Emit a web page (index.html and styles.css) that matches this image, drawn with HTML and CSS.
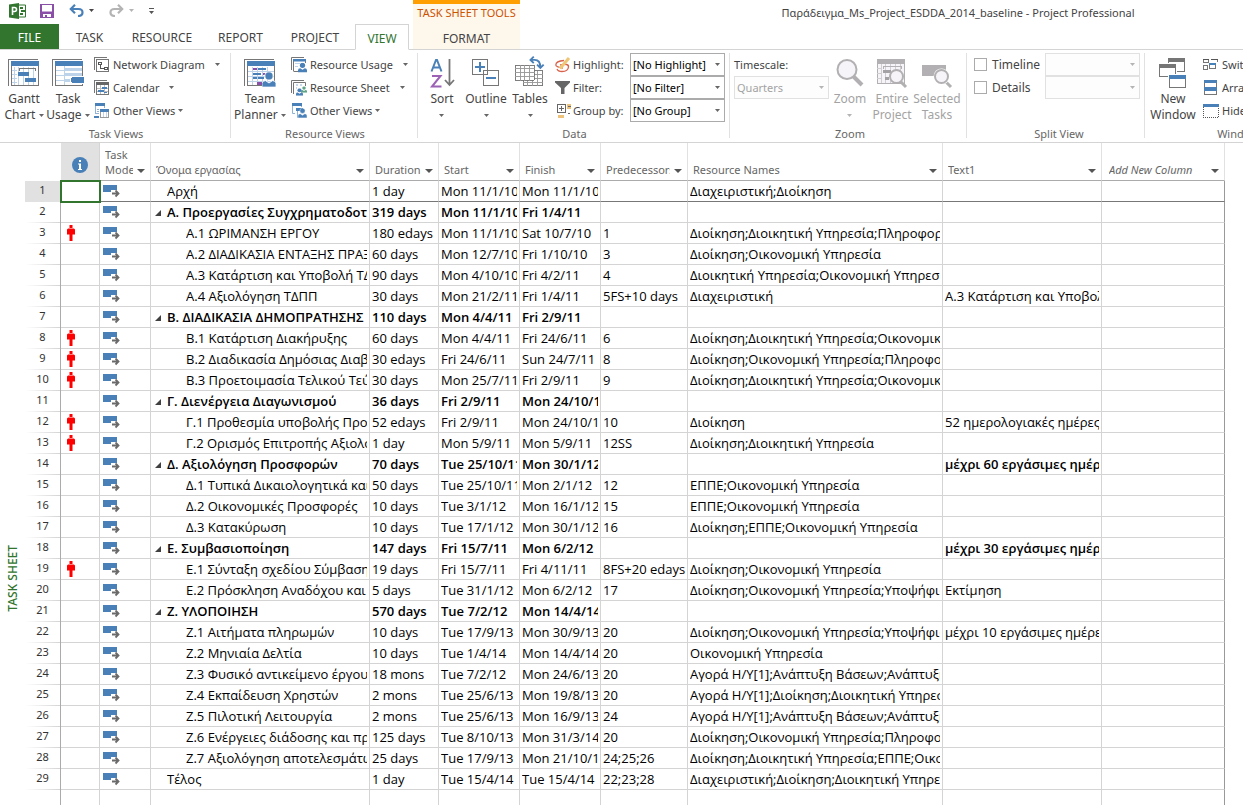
FILE: index.html
```html
<!DOCTYPE html>
<html lang="en">
<head>
<meta charset="utf-8">
<title>Παράδειγμα_Ms_Project_ESDDA_2014_baseline - Project Professional</title>
<link rel="stylesheet" href="styles.css">
</head>
<body>
<svg class="defs" aria-hidden="true">
  <symbol id="caret" viewBox="0 0 5 3"><path d="M0 0H5L2.500 3Z" fill="currentColor"/></symbol>
  <symbol id="drop" viewBox="0 0 8 5"><path d="M0 1H8L4 5Z" fill="currentColor"/></symbol>
  <symbol id="mode" viewBox="0 0 17 14">
    <path d="M0 1H14V8H0Z" fill="#4a80b8"/>
    <path d="M8 6H14V8H8Z" fill="#fff"/>
    <path d="M9 9.500H15M12.500 6.500 15.500 9.500l-3 3" fill="none" stroke="#6a6a6a" stroke-width="1.800"/>
  </symbol>
  <symbol id="man" viewBox="0 0 8 16"><path d="M2.500 0h3v3h-3zM1 3.500h6l1 1v5H5.500V16h-3V9.500H0v-5z" fill="#f00"/></symbol>
  <symbol id="tri" viewBox="0 0 6 6"><path d="M6 0V6H0Z" fill="#404040"/></symbol>
  <symbol id="person" viewBox="0 0 12 13"><circle cx="6" cy="3.500" r="3.500"/><path d="M0 13V10Q0 7.500 3 7.500L6 9.500L9 7.500Q12 7.500 12 10V13Z"/></symbol>
</svg>
<div class="app">
  <header class="top">
    <div class="left">
      <div class="qat">
        <svg class="logo" width="18" height="16" viewBox="0 0 18 16"><path d="M8 2h8.500v12H8z" fill="#fff" stroke="#31752f"/><path d="M11 4h3v2h-3zM12 7h4v2h-4zM11 10h3v2h-3z" fill="#31752f"/><path d="M0 1.500 10 0v16L0 14.500z" fill="#31752f"/><path d="M3.500 12V4.500h2a1.800 1.800 0 0 1 0 4h-2" fill="none" stroke="#fff" stroke-width="1.600"/></svg>
        <button class="q-save" aria-label="Save"><svg width="14" height="14" viewBox="0 0 14 14"><path d="M0 0h14v14H0z" fill="#8a50a8"/><path d="M2 1h10v6.500H2zM3 10h8v3H7v-2H5v2H3z" fill="#fff"/></svg></button>
        <button class="q-undo" aria-label="Undo"><svg width="15" height="13" viewBox="0 0 15 13"><path d="M1.500 5H9.500Q13.500 5 13.500 8.500T9 12M6 .8 1.800 5 6 9.200" fill="none" stroke="#4a80b8" stroke-width="2.200"/></svg></button>
        <button class="q-c1" aria-label="Undo list"><svg width="5" height="3"><use href="#caret"/></svg></button>
        <button class="q-redo dim" aria-label="Redo"><svg width="15" height="13" viewBox="0 0 15 13"><path d="M13.500 5H5.500Q1.500 5 1.500 8.500T6 12M9 .8 13.200 5 9 9.200" fill="none" stroke="#b4b4b4" stroke-width="2.200"/></svg></button>
        <button class="q-c2 dim" aria-label="Redo list"><svg width="5" height="3"><use href="#caret"/></svg></button>
        <button class="q-cust" aria-label="Customize"><svg width="5" height="6" viewBox="0 0 5 6"><path d="M0 0h5v1H0zM0 3h5L2.500 6z" fill="#555"/></svg></button>
      </div>
      <nav class="tabs">
        <button class="tab file">FILE</button>
        <button class="tab t-task">TASK</button>
        <button class="tab t-res">RESOURCE</button>
        <button class="tab t-rep">REPORT</button>
        <button class="tab t-pro">PROJECT</button>
        <button class="tab active">VIEW</button>
      </nav>
    </div>
    <div class="context">
      <div class="context-name">TASK SHEET TOOLS</div>
      <button class="tab">FORMAT</button>
    </div>
    <h1 class="title">Παράδειγμα_Ms_Project_ESDDA_2014_baseline - Project Professional</h1>
  </header>

  <div class="ribbon">
    <section class="group g-task">
      <div class="controls">
        <button class="big w44"><svg width="32" height="30" viewBox="0 0 32 30" shape-rendering="crispEdges"><path d="M.5 27V.5H30" fill="none" stroke="#767676"/><path d="M3.500 3.500h27v23h-27z" fill="#fff" stroke="#767676"/><path d="M3 2h28v5H3z" fill="#4a80b8"/><path d="M6.500 8v18M4 11.500h5M4 15.500h5M4 19.500h5M4 23.500h5M10.500 8v18M15.500 8v18M20.500 8v18M25.500 8v18" fill="none" stroke="#bdd3ea"/><path d="M11.500 12V9.500h16V12" fill="none" stroke="#767676"/><path d="M10 13h11v4H10zM17 19h11v4H17z" fill="#4a80b8"/></svg><span>Gantt<br>Chart <svg width="5" height="3"><use href="#caret"/></svg></span></button>
        <button class="big w44"><svg width="32" height="30" viewBox="0 0 32 30" shape-rendering="crispEdges"><path d="M.5 27V.5H30" fill="none" stroke="#767676"/><path d="M3.500 3.500h27v23h-27z" fill="#fff" stroke="#767676"/><path d="M3 2h28v5H3z" fill="#4a80b8"/><path d="M4 11.500h8M4 16.500h8M4 21.500h8M12.500 7v19" fill="none" stroke="#bdd3ea"/><path d="M13 9h17v3H13zM13 14h17v3H13zM13 20h6v3h-6z" fill="#bdd3ea"/><path d="M18 17h14v8H18z" fill="#fff"/><path d="M20 18h11l1 1v4l-1 1H20l-1-1v-4z" fill="#4a80b8"/></svg><span>Task<br>Usage <svg width="5" height="3"><use href="#caret"/></svg></span></button>
        <div class="stack">
          <button class="small"><svg width="16" height="16" viewBox="0 0 16 16" shape-rendering="crispEdges"><path d="M.5 13V.5H13M2.500 2.500h12v12h-12z" fill="none" stroke="#767676"/><path d="M4.500 5.500h3v2h-3zM10.500 10.500h3v2h-3zM6.500 8v3.500H10" fill="none" stroke="#555"/></svg><span>Network Diagram</span><svg class="far" width="5" height="3"><use href="#caret"/></svg></button>
          <button class="small"><svg width="16" height="16" viewBox="0 0 16 16" shape-rendering="crispEdges"><path d="M.5 13V.5H13M2.500 2.500h12v12h-12z" fill="none" stroke="#767676"/><path d="M2 2h13v3H2z" fill="#666"/><path d="M3 8.500h11M3 11.500h11M6.500 5v9M10.500 5v9" stroke="#bbb"/><path d="M8 7h5v2H8zM4 10h6v2H4zM10 12h3v1h-3z" fill="#4a80b8"/></svg><span>Calendar</span><svg class="far" width="5" height="3"><use href="#caret"/></svg></button>
          <button class="small"><svg width="16" height="16" viewBox="0 0 16 16" shape-rendering="crispEdges"><path d="M1.500 1.500h9v9h-9z" fill="#fff" stroke="#8fb2d8"/><path d="M1 0h10v3H1zM0 13h5v2H0z" fill="#4a80b8"/><path d="M3 6h4M3 8.500h2" stroke="#8fb2d8"/><path d="M5 5h10v10H5z" fill="#fff"/><path d="M6.500 7.500h8v7h-8z" fill="none" stroke="#999"/><path d="M6 6h9v3H6z" fill="#4a80b8"/><path d="M9.500 9v5M12.500 9v5" stroke="#bdd3ea"/></svg><span>Other Views</span><svg width="5" height="3"><use href="#caret"/></svg></button>
        </div>
      </div>
      <h2>Task Views</h2>
    </section>

    <section class="group g-res">
      <div class="controls">
        <button class="big w54"><svg width="32" height="30" viewBox="0 0 32 30"><g shape-rendering="crispEdges"><path d="M.5 27V.5H30" fill="none" stroke="#767676"/><path d="M3.500 3.500h27v23h-27z" fill="#fff" stroke="#767676"/><path d="M3 2h28v5H3z" fill="#4a80b8"/><path d="M8.500 8v18M13.500 8v18M18.500 8v18M23.500 8v18M4 12.500h26M4 17.500h26M4 22.500h26" fill="none" stroke="#bdd3ea"/><path d="M9 9h4v2H9zM19 14h4v2h-4zM13 23h5v3h-5z" fill="#8a50a8"/><path d="M14 9h8v2h-8zM9 14h8v2H9zM9 18h4v2H9zM14 18h6v2h-6z" fill="#4a80b8"/></g><svg x="18" y="12" width="14" height="17" viewBox="0 0 12 13" fill="#4a80b8" stroke="#fff" stroke-width=".7"><use href="#person"/></svg></svg><span>Team<br>Planner <svg width="5" height="3"><use href="#caret"/></svg></span></button>
        <div class="stack">
          <button class="small"><svg width="16" height="16" viewBox="0 0 16 16"><path d="M.5 13V.5H13M2.500 14V2.500h12V6M2.500 14.500H8" fill="none" stroke="#767676"/><path d="M2 2h13v2.500H2z" fill="#4a80b8"/><path d="M4 6.500h5M4 9.500h3" stroke="#bdd3ea"/><svg x="7" y="5" width="9" height="11" viewBox="0 0 12 13" fill="#4a80b8"><use href="#person"/></svg></svg><span>Resource Usage</span><svg class="far" width="5" height="3"><use href="#caret"/></svg></button>
          <button class="small"><svg width="16" height="16" viewBox="0 0 16 16"><path d="M.5 13V.5H13M2.500 14V2.500h12V6" fill="none" stroke="#767676"/><path d="M5 5h2M9 5h2M5 8h1" stroke="#8fb2d8"/><svg x="10" y="5" width="6" height="9" viewBox="0 0 12 13" fill="#5fa487"><use href="#person"/></svg><svg x="5" y="8" width="7" height="8" viewBox="0 0 12 13" fill="#4a80b8"><use href="#person"/></svg></svg><span>Resource Sheet</span><svg class="far" width="5" height="3"><use href="#caret"/></svg></button>
          <button class="small"><svg width="16" height="16" viewBox="0 0 16 16"><path d="M1.500 1v9.500H4M10.500 1v3M6.500 5v9.500H9" fill="none" stroke="#8fb2d8"/><path d="M1 0h10v3H1zM5 5h7v3H5z" fill="#4a80b8"/><svg x="7" y="4" width="9" height="12" viewBox="0 0 12 13" fill="#4a80b8" stroke="#fff" stroke-width=".6"><use href="#person"/></svg></svg><span>Other Views</span><svg width="5" height="3"><use href="#caret"/></svg></button>
        </div>
      </div>
      <h2>Resource Views</h2>
    </section>

    <section class="group g-data">
      <div class="controls">
        <button class="big w44"><svg width="26" height="30" viewBox="0 0 26 30" fill="none"><path d="M2.500 12.500 7 1h1L12.500 12.500M4 8.500h7" stroke="#4a80b8" stroke-width="2"/><path d="M3 17h8.500L3 27.500h9.500" stroke="#9b62b5" stroke-width="2"/><path d="M20.500 0v26M16 21l4.500 5 4.500-5" stroke="#767676" stroke-width="1.800"/></svg><span>Sort<br><svg width="5" height="3"><use href="#caret"/></svg></span></button>
        <button class="big w44"><svg width="28" height="30" viewBox="0 0 28 30" shape-rendering="crispEdges"><path d="M.5.5h15v15H.5zM11.500 11.500h15v15h-15z" fill="#fff" stroke="#767676"/><path d="M3 7h10v2H3zM7 3h2v10H7zM14 18h10v2H14z" fill="#4a80b8"/></svg><span>Outline<br><svg width="5" height="3"><use href="#caret"/></svg></span></button>
        <button class="big w44"><svg width="32" height="34" viewBox="0 2 32 34"><g shape-rendering="crispEdges"><path d="M9.500 15.500h20v16h-20z" fill="#fff" stroke="#767676"/><path d="M9 19.500h21M9 23.500h21M9 27.500h21M13.500 16v16M18.500 16v16M24.500 16v16" stroke="#999"/><path d="M.5 9.500h20v16H.5z" fill="#fff" stroke="#767676"/><path d="M0 13.500h21M0 17.500h21M0 21.500h21M5.500 9v17M10.500 9v17M15.500 9v17" stroke="#999"/></g><path d="M16 4h5Q27 4 27 12M20 .5 16.500 4 20 7.500M23.500 9 27 12.500 30.500 9" fill="none" stroke="#4a80b8" stroke-width="2"/></svg><span>Tables<br><svg width="5" height="3"><use href="#caret"/></svg></span></button>
        <div class="fields">
          <svg width="16" height="16" viewBox="0 0 16 16"><path d="M9 3.500Q1 4 .8 8Q1 10 8 11M5 8Q14 6 13.500 10Q13 14.500 7 14.500Q3 14.500 2 12" fill="none" stroke="#d9624b" stroke-width="1.300"/><path d="M14 1 5 11.500" stroke="#eec676" stroke-width="3"/></svg>
          <label for="hl">Highlight:</label>
          <span class="pick"><select id="hl"><option>[No Highlight]</option></select><svg width="5" height="3"><use href="#caret"/></svg></span>
          <svg width="16" height="16" viewBox="0 0 16 16"><path d="M0 1h15v1.500L9.500 8v6H6V8L0 2.500z" fill="#666"/></svg>
          <label for="fl">Filter:</label>
          <span class="pick"><select id="fl"><option>[No Filter]</option></select><svg width="5" height="3"><use href="#caret"/></svg></span>
          <svg width="16" height="16" viewBox="0 0 16 16" shape-rendering="crispEdges"><path d="M2.500 1.500h8v8h-8zM4 5.500h5M6.500 3v5" fill="none" stroke="#666"/><path d="M12 1h4v5h-4zM3 12h6v3H3z" fill="#eec27a"/><path d="M13 3h3v1h-3zM13 10h2v1h-2z" fill="#666"/></svg>
          <label for="gr">Group by:</label>
          <span class="pick"><select id="gr"><option>[No Group]</option></select><svg width="5" height="3"><use href="#caret"/></svg></span>
        </div>
      </div>
      <h2>Data</h2>
    </section>

    <section class="group g-zoom">
      <div class="controls">
        <div class="scale">
          <label for="ts">Timescale:</label>
          <span class="pick"><select id="ts" disabled><option>Quarters</option></select><svg width="5" height="3"><use href="#caret"/></svg></span>
        </div>
        <button class="big w42" disabled><svg width="28" height="30" viewBox="0 0 28 30"><path d="m17 17 9 9" stroke="#b2b0b2" stroke-width="4"/><circle cx="11" cy="10.500" r="9.500" fill="#f6f4f8" stroke="#b2b0b2" stroke-width="2"/></svg><span>Zoom<br><svg width="5" height="3"><use href="#caret"/></svg></span></button>
        <button class="big w42" disabled><svg width="30" height="32" viewBox="0 0 30 32"><g shape-rendering="crispEdges"><path d="M.5 1.500h27v24H.5z" fill="#f6f4f8" stroke="#b2b0b2"/><path d="M0 1h28v5H0z" fill="#b2b0b2"/><path d="M4.500 6v19M8.500 6v19M13.500 6v19M18.500 6v19M23.500 6v19M0 10.500h5M0 15.500h5M0 20.500h5" stroke="#d0ced0"/><path d="M6.500 11V8.500h18V11" fill="none" stroke="#b2b0b2"/><path d="M6 12h8v3H6zM8 19h4v3H8z" fill="#a4a2a4"/></g><path d="m23 23 6 6" stroke="#b2b0b2" stroke-width="3"/><circle cx="19.500" cy="18.500" r="6.500" fill="#f6f4f8" stroke="#b2b0b2" stroke-width="2"/></svg><span>Entire<br>Project</span></button>
        <button class="big w48" disabled><svg width="30" height="32" viewBox="0 0 30 32"><path d="M0 7h24v11H0z" fill="#b2b0b2"/><path d="m23 23 6 6" stroke="#b2b0b2" stroke-width="3"/><circle cx="19.500" cy="18.500" r="8" fill="#fff"/><circle cx="19.500" cy="18.500" r="6.500" fill="#f6f4f8" stroke="#b2b0b2" stroke-width="2"/></svg><span>Selected<br>Tasks</span></button>
      </div>
      <h2>Zoom</h2>
    </section>

    <section class="group g-split">
      <div class="controls split">
        <label><input type="checkbox"> Timeline</label>
        <span class="pick"><select aria-label="Timeline view" disabled><option></option></select><svg width="5" height="3"><use href="#caret"/></svg></span>
        <label><input type="checkbox"> Details</label>
        <span class="pick"><select aria-label="Details view" disabled><option></option></select><svg width="5" height="3"><use href="#caret"/></svg></span>
      </div>
      <h2>Split View</h2>
    </section>

    <section class="group g-win">
      <div class="controls">
        <button class="big w52"><svg width="28" height="32" viewBox="0 0 28 32" shape-rendering="crispEdges"><path d="M9.500.5h16v13h-16z" fill="#fff" stroke="#767676"/><path d="M9 0h17v4H9z" fill="#767676"/><path d="M0 5h18v15H0z" fill="#fff"/><path d="M.5 6.500h16v12H.5z" fill="#fff" stroke="#767676"/><path d="M0 6h17v4H0z" fill="#767676"/><path d="M9 16h19v15H9z" fill="#fff"/><path d="M10.500 17.500h16v12h-16z" fill="#fff" stroke="#767676"/><path d="M10 17h17v4H10z" fill="#4a80b8"/></svg><span>New<br>Window</span></button>
        <div class="stack">
          <button class="small"><svg width="16" height="16" viewBox="0 0 16 16" shape-rendering="crispEdges"><path d="M.5 2.500h5v3h-5zM8.500 2.500h6V5M.5 8.500h4v4h-4zM6.500 6.500h6v5h-6z" fill="none" stroke="#767676"/><path d="M0 2h6v1H0zM8 2h7v1H8z" fill="#555"/><path d="M6 6h7v2H6z" fill="#4a80b8"/></svg><span>Switch Windows</span></button>
          <button class="small"><svg width="16" height="16" viewBox="0 0 16 16" shape-rendering="crispEdges"><path d="M1.500.5h12v14h-12z" fill="#fff" stroke="#767676"/><path d="M1 0h13v3H1zM1 7h13v4H1z" fill="#4a80b8"/></svg><span>Arrange All</span></button>
          <button class="small"><svg width="16" height="16" viewBox="0 0 16 16" shape-rendering="crispEdges"><path d="M.5 4v10.500h15V4" fill="none" stroke="#555" stroke-dasharray="1 1"/><path d="M0 1h16v3H0z" fill="#4a80b8"/></svg><span>Hide</span></button>
        </div>
      </div>
      <h2>Window</h2>
    </section>
  </div>

  <main>
    <aside><span>TASK SHEET</span></aside>
    <table>
      <colgroup><col class="c0"><col class="c1"><col class="c2"><col class="c3"><col class="c4"><col class="c5"><col class="c5"><col class="c7"><col class="c8"><col class="c9"><col class="c10"></colgroup>
      <thead><tr>
        <th></th>
        <th class="info"><svg width="16" height="16" viewBox="0 0 16 16"><circle cx="8" cy="8" r="8" fill="#4a80b8"/><path d="M7 3h2v2H7zM6 6.500h3V12h1v1H6v-1h1V7.500H6z" fill="#fff"/></svg></th>
        <th><div><span>Task Mode</span><button aria-label="Task Mode menu"><svg width="8" height="5"><use href="#drop"/></svg></button></div></th>
        <th><div><span>Όνομα εργασίας</span><button aria-label="Name menu"><svg width="8" height="5"><use href="#drop"/></svg></button></div></th>
        <th><div><span>Duration</span><button aria-label="Duration menu"><svg width="8" height="5"><use href="#drop"/></svg></button></div></th>
        <th><div><span>Start</span><button aria-label="Start menu"><svg width="8" height="5"><use href="#drop"/></svg></button></div></th>
        <th><div><span>Finish</span><button aria-label="Finish menu"><svg width="8" height="5"><use href="#drop"/></svg></button></div></th>
        <th><div><span>Predecessors</span><button aria-label="Predecessors menu"><svg width="8" height="5"><use href="#drop"/></svg></button></div></th>
        <th><div><span>Resource Names</span><button aria-label="Resource Names menu"><svg width="8" height="5"><use href="#drop"/></svg></button></div></th>
        <th><div><span>Text1</span><button aria-label="Text1 menu"><svg width="8" height="5"><use href="#drop"/></svg></button></div></th>
        <th class="add"><div><span>Add New Column</span><button aria-label="Add New Column menu"><svg width="8" height="5"><use href="#drop"/></svg></button></div></th>
      </tr></thead>
      <tbody>
        <tr class="current top-level"><th>1</th><td class="selected"></td><td><svg class="mode"><use href="#mode"/></svg></td><td><div>Αρχή</div></td><td><div>1 day</div></td><td><div>Mon 11/1/10</div></td><td><div>Mon 11/1/10</div></td><td></td><td><div>Διαχειριστική;Διοίκηση</div></td><td></td><td></td></tr>
        <tr class="summary"><th>2</th><td></td><td><svg class="mode"><use href="#mode"/></svg></td><td><div><svg class="tri"><use href="#tri"/></svg>Α. Προεργασίες Συγχρηματοδοτούμενου</div></td><td><div>319 days</div></td><td><div>Mon 11/1/10</div></td><td><div>Fri 1/4/11</div></td><td></td><td></td><td></td><td></td></tr>
        <tr><th>3</th><td><svg class="man"><use href="#man"/></svg></td><td><svg class="mode"><use href="#mode"/></svg></td><td><div>Α.1 ΩΡΙΜΑΝΣΗ ΕΡΓΟΥ</div></td><td><div>180 edays</div></td><td><div>Mon 11/1/10</div></td><td><div>Sat 10/7/10</div></td><td><div>1</div></td><td><div>Διοίκηση;Διοικητική Υπηρεσία;Πληροφορική</div></td><td></td><td></td></tr>
        <tr><th>4</th><td></td><td><svg class="mode"><use href="#mode"/></svg></td><td><div>Α.2 ΔΙΑΔΙΚΑΣΙΑ ΕΝΤΑΞΗΣ ΠΡΑΞΗΣ</div></td><td><div>60 days</div></td><td><div>Mon 12/7/10</div></td><td><div>Fri 1/10/10</div></td><td><div>3</div></td><td><div>Διοίκηση;Οικονομική Υπηρεσία</div></td><td></td><td></td></tr>
        <tr><th>5</th><td></td><td><svg class="mode"><use href="#mode"/></svg></td><td><div>Α.3 Κατάρτιση και Υποβολή ΤΔΠΠ</div></td><td><div>90 days</div></td><td><div>Mon 4/10/10</div></td><td><div>Fri 4/2/11</div></td><td><div>4</div></td><td><div>Διοικητική Υπηρεσία;Οικονομική Υπηρεσία</div></td><td></td><td></td></tr>
        <tr><th>6</th><td></td><td><svg class="mode"><use href="#mode"/></svg></td><td><div>Α.4 Αξιολόγηση ΤΔΠΠ</div></td><td><div>30 days</div></td><td><div>Mon 21/2/11</div></td><td><div>Fri 1/4/11</div></td><td><div>5FS+10 days</div></td><td><div>Διαχειριστική</div></td><td><div>Α.3 Κατάρτιση και Υποβολή</div></td><td></td></tr>
        <tr class="summary"><th>7</th><td></td><td><svg class="mode"><use href="#mode"/></svg></td><td><div><svg class="tri"><use href="#tri"/></svg>Β. ΔΙΑΔΙΚΑΣΙΑ ΔΗΜΟΠΡΑΤΗΣΗΣ</div></td><td><div>110 days</div></td><td><div>Mon 4/4/11</div></td><td><div>Fri 2/9/11</div></td><td></td><td></td><td></td><td></td></tr>
        <tr><th>8</th><td><svg class="man"><use href="#man"/></svg></td><td><svg class="mode"><use href="#mode"/></svg></td><td><div>Β.1 Κατάρτιση Διακήρυξης</div></td><td><div>60 days</div></td><td><div>Mon 4/4/11</div></td><td><div>Fri 24/6/11</div></td><td><div>6</div></td><td><div>Διοίκηση;Διοικητική Υπηρεσία;Οικονομική</div></td><td></td><td></td></tr>
        <tr><th>9</th><td><svg class="man"><use href="#man"/></svg></td><td><svg class="mode"><use href="#mode"/></svg></td><td><div>Β.2 Διαδικασία Δημόσιας Διαβούλευσης</div></td><td><div>30 edays</div></td><td><div>Fri 24/6/11</div></td><td><div>Sun 24/7/11</div></td><td><div>8</div></td><td><div>Διοίκηση;Οικονομική Υπηρεσία;Πληροφορική</div></td><td></td><td></td></tr>
        <tr><th>10</th><td><svg class="man"><use href="#man"/></svg></td><td><svg class="mode"><use href="#mode"/></svg></td><td><div>Β.3 Προετοιμασία Τελικού Τεύχους</div></td><td><div>30 days</div></td><td><div>Mon 25/7/11</div></td><td><div>Fri 2/9/11</div></td><td><div>9</div></td><td><div>Διοίκηση;Διοικητική Υπηρεσία;Οικονομική</div></td><td></td><td></td></tr>
        <tr class="summary"><th>11</th><td></td><td><svg class="mode"><use href="#mode"/></svg></td><td><div><svg class="tri"><use href="#tri"/></svg>Γ. Διενέργεια Διαγωνισμού</div></td><td><div>36 days</div></td><td><div>Fri 2/9/11</div></td><td><div>Mon 24/10/11</div></td><td></td><td></td><td></td><td></td></tr>
        <tr><th>12</th><td><svg class="man"><use href="#man"/></svg></td><td><svg class="mode"><use href="#mode"/></svg></td><td><div>Γ.1 Προθεσμία υποβολής Προσφορών</div></td><td><div>52 edays</div></td><td><div>Fri 2/9/11</div></td><td><div>Mon 24/10/11</div></td><td><div>10</div></td><td><div>Διοίκηση</div></td><td><div>52 ημερολογιακές ημέρες</div></td><td></td></tr>
        <tr><th>13</th><td><svg class="man"><use href="#man"/></svg></td><td><svg class="mode"><use href="#mode"/></svg></td><td><div>Γ.2 Ορισμός Επιτροπής Αξιολόγησης</div></td><td><div>1 day</div></td><td><div>Mon 5/9/11</div></td><td><div>Mon 5/9/11</div></td><td><div>12SS</div></td><td><div>Διοίκηση;Διοικητική Υπηρεσία</div></td><td></td><td></td></tr>
        <tr class="summary"><th>14</th><td></td><td><svg class="mode"><use href="#mode"/></svg></td><td><div><svg class="tri"><use href="#tri"/></svg>Δ. Αξιολόγηση Προσφορών</div></td><td><div>70 days</div></td><td><div>Tue 25/10/11</div></td><td><div>Mon 30/1/12</div></td><td></td><td></td><td><div>μέχρι 60 εργάσιμες ημέρες</div></td><td></td></tr>
        <tr><th>15</th><td></td><td><svg class="mode"><use href="#mode"/></svg></td><td><div>Δ.1 Τυπικά Δικαιολογητικά και</div></td><td><div>50 days</div></td><td><div>Tue 25/10/11</div></td><td><div>Mon 2/1/12</div></td><td><div>12</div></td><td><div>ΕΠΠΕ;Οικονομική Υπηρεσία</div></td><td></td><td></td></tr>
        <tr><th>16</th><td></td><td><svg class="mode"><use href="#mode"/></svg></td><td><div>Δ.2 Οικονομικές Προσφορές</div></td><td><div>10 days</div></td><td><div>Tue 3/1/12</div></td><td><div>Mon 16/1/12</div></td><td><div>15</div></td><td><div>ΕΠΠΕ;Οικονομική Υπηρεσία</div></td><td></td><td></td></tr>
        <tr><th>17</th><td></td><td><svg class="mode"><use href="#mode"/></svg></td><td><div>Δ.3 Κατακύρωση</div></td><td><div>10 days</div></td><td><div>Tue 17/1/12</div></td><td><div>Mon 30/1/12</div></td><td><div>16</div></td><td><div>Διοίκηση;ΕΠΠΕ;Οικονομική Υπηρεσία</div></td><td></td><td></td></tr>
        <tr class="summary"><th>18</th><td></td><td><svg class="mode"><use href="#mode"/></svg></td><td><div><svg class="tri"><use href="#tri"/></svg>Ε. Συμβασιοποίηση</div></td><td><div>147 days</div></td><td><div>Fri 15/7/11</div></td><td><div>Mon 6/2/12</div></td><td></td><td></td><td><div>μέχρι 30 εργάσιμες ημέρες</div></td><td></td></tr>
        <tr><th>19</th><td><svg class="man"><use href="#man"/></svg></td><td><svg class="mode"><use href="#mode"/></svg></td><td><div>Ε.1 Σύνταξη σχεδίου Σύμβασης</div></td><td><div>19 days</div></td><td><div>Fri 15/7/11</div></td><td><div>Fri 4/11/11</div></td><td><div>8FS+20 edays</div></td><td><div>Διοίκηση;Οικονομική Υπηρεσία</div></td><td></td><td></td></tr>
        <tr><th>20</th><td></td><td><svg class="mode"><use href="#mode"/></svg></td><td><div>Ε.2 Πρόσκληση Αναδόχου και</div></td><td><div>5 days</div></td><td><div>Tue 31/1/12</div></td><td><div>Mon 6/2/12</div></td><td><div>17</div></td><td><div>Διοίκηση;Οικονομική Υπηρεσία;Υποψήφιος</div></td><td><div>Εκτίμηση</div></td><td></td></tr>
        <tr class="summary"><th>21</th><td></td><td><svg class="mode"><use href="#mode"/></svg></td><td><div><svg class="tri"><use href="#tri"/></svg>Ζ. ΥΛΟΠΟΙΗΣΗ</div></td><td><div>570 days</div></td><td><div>Tue 7/2/12</div></td><td><div>Mon 14/4/14</div></td><td></td><td></td><td></td><td></td></tr>
        <tr><th>22</th><td></td><td><svg class="mode"><use href="#mode"/></svg></td><td><div>Ζ.1 Αιτήματα πληρωμών</div></td><td><div>10 days</div></td><td><div>Tue 17/9/13</div></td><td><div>Mon 30/9/13</div></td><td><div>20</div></td><td><div>Διοίκηση;Οικονομική Υπηρεσία;Υποψήφιος</div></td><td><div>μέχρι 10 εργάσιμες ημέρες</div></td><td></td></tr>
        <tr><th>23</th><td></td><td><svg class="mode"><use href="#mode"/></svg></td><td><div>Ζ.2 Μηνιαία Δελτία</div></td><td><div>10 days</div></td><td><div>Tue 1/4/14</div></td><td><div>Mon 14/4/14</div></td><td><div>20</div></td><td><div>Οικονομική Υπηρεσία</div></td><td></td><td></td></tr>
        <tr><th>24</th><td></td><td><svg class="mode"><use href="#mode"/></svg></td><td><div>Ζ.3 Φυσικό αντικείμενο έργου</div></td><td><div>18 mons</div></td><td><div>Tue 7/2/12</div></td><td><div>Mon 24/6/13</div></td><td><div>20</div></td><td><div>Αγορά Η/Υ[1];Ανάπτυξη Βάσεων;Ανάπτυξη</div></td><td></td><td></td></tr>
        <tr><th>25</th><td></td><td><svg class="mode"><use href="#mode"/></svg></td><td><div>Ζ.4 Εκπαίδευση Χρηστών</div></td><td><div>2 mons</div></td><td><div>Tue 25/6/13</div></td><td><div>Mon 19/8/13</div></td><td><div>20</div></td><td><div>Αγορά Η/Υ[1];Διοίκηση;Διοικητική Υπηρεσία</div></td><td></td><td></td></tr>
        <tr><th>26</th><td></td><td><svg class="mode"><use href="#mode"/></svg></td><td><div>Ζ.5 Πιλοτική Λειτουργία</div></td><td><div>2 mons</div></td><td><div>Tue 25/6/13</div></td><td><div>Mon 16/9/13</div></td><td><div>24</div></td><td><div>Αγορά Η/Υ[1];Ανάπτυξη Βάσεων;Ανάπτυξη</div></td><td></td><td></td></tr>
        <tr><th>27</th><td></td><td><svg class="mode"><use href="#mode"/></svg></td><td><div>Ζ.6 Ενέργειες διάδοσης και προβολής</div></td><td><div>125 days</div></td><td><div>Tue 8/10/13</div></td><td><div>Mon 31/3/14</div></td><td><div>20</div></td><td><div>Διοίκηση;Οικονομική Υπηρεσία;Πληροφορική</div></td><td></td><td></td></tr>
        <tr><th>28</th><td></td><td><svg class="mode"><use href="#mode"/></svg></td><td><div>Ζ.7 Αξιολόγηση αποτελεσμάτων</div></td><td><div>25 days</div></td><td><div>Tue 17/9/13</div></td><td><div>Mon 21/10/13</div></td><td><div>24;25;26</div></td><td><div>Διοίκηση;Διοικητική Υπηρεσία;ΕΠΠΕ;Οικονομική</div></td><td></td><td></td></tr>
        <tr class="top-level"><th>29</th><td></td><td><svg class="mode"><use href="#mode"/></svg></td><td><div>Τέλος</div></td><td><div>1 day</div></td><td><div>Tue 15/4/14</div></td><td><div>Tue 15/4/14</div></td><td><div>22;23;28</div></td><td><div>Διαχειριστική;Διοίκηση;Διοικητική Υπηρεσία</div></td><td></td><td></td></tr>
        <tr><th></th><td></td><td></td><td></td><td></td><td></td><td></td><td></td><td></td><td></td><td></td></tr>
      </tbody>
    </table>
  </main>
</div>
</body>
</html>
```
FILE: styles.css
```css
* { box-sizing: border-box; }
body {
  margin: 0;
  background: #fff;
  color: #444;
  font: 12px/16px "Noto Sans", "Open Sans", sans-serif;
}
button, select, input { font: inherit; color: inherit; }
button { border: 0; background: none; padding: 0; white-space: nowrap; }
svg { flex: none; }
.defs { display: none; }
.app { display: flex; flex-direction: column; height: 100vh; overflow: hidden; }

/* Title bar and tabs */
.top { display: flex; border-bottom: 1px solid #d4d4d4; height: 50px; flex: none; }
.left { flex: 0 0 413px; display: flex; flex-direction: column; }
.qat { height: 25px; display: flex; align-items: center; padding: 0 0 3px 9px; }
.qat button { display: flex; }
.q-save { margin-left: 13px; }
.q-undo { margin-left: 15px; }
.q-c1 { margin-left: 5px; }
.q-redo { margin-left: 15px; }
.q-c2 { margin-left: 5px; }
.q-cust { margin-left: 15px; }
.dim { color: #b4b4b4; }
.tabs { display: flex; height: 25px; }
.tab { display: block; height: 24px; padding-top: 3px; text-align: center; }
.file { width: 59px; height: 25px; background: #31752f; color: #fff; }
.t-task { width: 61px; }
.t-res { width: 84px; }
.t-rep { width: 73px; }
.t-pro { width: 76px; }
.tab.active { width: 54px; height: 26px; margin-left: 2px; border: 1px solid #d4d4d4; border-bottom-color: #fff; color: #31752f; background: #fff; }
.context { flex: 0 0 107px; background: #fef7ec; border-top: 4px solid #ff9e00; text-align: center; }
.context-name { color: #cc5200; height: 21px; line-height: 18px; white-space: nowrap; font-size: 11px; }
.context .tab { width: 100%; }
.title { flex: 1; margin: 0; padding: 5px 0 0 153px; text-align: center; font-size: 11px; font-weight: 400; line-height: 16px; white-space: nowrap; }

/* Ribbon */
.ribbon { display: flex; flex: none; height: 93px; border-bottom: 1px solid #d4d4d4; overflow: hidden; padding-top: 3px; }
.group { flex: none; display: flex; flex-direction: column; border-right: 1px solid #e1e1e1; margin-bottom: 4px; }
.group h2 { margin: 4px 0 0; font-size: 11px; line-height: 16px; font-weight: 400; color: #666; text-align: center; }
.controls { display: flex; flex: none; height: 69px; }
.g-task { width: 231px; padding-left: 2px; }
.g-res { width: 187px; padding-left: 2px; }
.g-data { width: 312px; padding-left: 2px; }
.g-zoom { width: 237px; padding-left: 4px; }
.g-split { width: 178px; padding-left: 7px; }
.g-win { width: 184px; padding-left: 2px; border-right: 0; }
.big { display: flex; flex-direction: column; align-items: center; justify-content: space-between; height: 70px; padding-top: 5px; }
.big > svg { height: 32px; overflow: visible; }
.big > span { display: block; line-height: 16px; text-align: center; }
.big:disabled { color: #a3a3a3; }
.big span svg, .small svg:last-child { color: #666; vertical-align: middle; }
.big:disabled span svg { color: #b4b4b4; }
.w42 { width: 42px; }
.w44 { width: 44px; }
.w48 { width: 48px; }
.w52 { width: 52px; }
.w54 { width: 54px; }
.stack { display: flex; flex-direction: column; padding-left: 4px; }
.small { display: flex; align-items: center; height: 23px; gap: 3px; font-size: 11px; }
.small .far { margin-left: 7px; }
.fields { display: grid; grid-template-columns: 16px 55px 95px; grid-auto-rows: 23px; align-items: center; column-gap: 2px; padding-left: 3px; white-space: nowrap; font-size: 11px; }
.pick { position: relative; display: block; height: 23px; font-size: 11px; }
.pick select { appearance: none; width: 100%; height: 23px; padding: 0 2px; border: 1px solid #ababab; border-radius: 0; background: #fff; color: #000; }
.pick select:disabled { border-color: #e1e1e1; background: #fdfdfd; color: #a3a3a3; opacity: 1; }
.pick svg { position: absolute; right: 5px; top: 10px; color: #666; pointer-events: none; }
.pick select:disabled + svg { color: #b4b4b4; }
.scale { width: 95px; font-size: 11px; }
.scale label { display: block; height: 23px; line-height: 23px; }
.split { display: grid; grid-template-columns: 71px 95px; grid-auto-rows: 23px; align-content: start; }
.split label { display: flex; align-items: center; gap: 5px; }
.split input { appearance: none; width: 13px; height: 13px; margin: 0; border: 1px solid #ababab; background: #fff; }

/* Sheet */
main { display: flex; flex: 1; min-height: 0; overflow: hidden; }
aside { flex: 0 0 25px; padding: 402px 0 0 5px; }
aside span { writing-mode: vertical-rl; transform: rotate(180deg); color: #31752f; white-space: nowrap; font-weight: 500; }
table { flex: none; align-self: flex-start; table-layout: fixed; width: 1200px; border-spacing: 0; color: #000; }
.c0 { width: 36px; }
.c1 { width: 39px; }
.c2 { width: 51px; }
.c3 { width: 219px; }
.c4 { width: 69px; }
.c5 { width: 81px; }
.c7 { width: 87px; }
.c8 { width: 255px; }
.c9 { width: 159px; }
.c10 { width: 123px; }
thead th { height: 38px; padding: 0 2px 3px 5px; border-bottom: 1px solid #ababab; border-right: 1px solid #e1e1e1; color: #666; font-weight: 400; font-size: 11px; line-height: 15px; text-align: left; vertical-align: bottom; }
thead th:first-child { border-color: transparent; }
thead th.info { background: #e1e1e1; text-align: center; padding: 0 0 4px; border-color: #ababab; border-right-color: #d4d4d4; }
thead .info svg { display: block; margin: 0 auto 3px; }
thead div { display: flex; align-items: flex-end; }
thead span { flex: 1; overflow: hidden; white-space: nowrap; }
thead th:nth-child(3) span { white-space: normal; }
thead button { flex: none; width: 15px; height: 13px; color: #555; display: flex; align-items: center; justify-content: center; }
thead .add { font-style: italic; padding-left: 7px; }
tbody tr { height: 21px; }
tbody td { height: 21px; padding: 0 2px; border-right: 1px solid #d4d4d4; border-bottom: 1px solid #d4d4d4; font: 13px/18px "Open Sans", "Noto Sans", sans-serif; }
tbody th { padding: 0 0 5px; font-weight: 400; font-size: 11px; line-height: 15px; color: #333; border-right: 1px solid #ababab; background: linear-gradient(90deg, #fff, #d4d4d4) bottom / 100% 1px no-repeat; }
td div { overflow: hidden; white-space: nowrap; height: 18px; }
td:nth-child(4) { padding-left: 35px; }
.summary td:nth-child(4) { padding-left: 4px; }
.top-level td:nth-child(4) { padding-left: 16px; }
.summary td { font-weight: 600; }
td:last-child { border-right-color: #999; }
.current td { border-bottom-color: #777; }
.current th { background: #e1e1e1; }
.selected { outline: 2px solid #31752f; outline-offset: -1px; }
td svg { display: block; }
.mode { width: 17px; height: 14px; margin-left: 1px; }
.man { width: 8px; height: 16px; margin-left: 4px; }
.tri { display: inline-block; width: 6px; height: 6px; margin-right: 6px; vertical-align: 1px; }
```
